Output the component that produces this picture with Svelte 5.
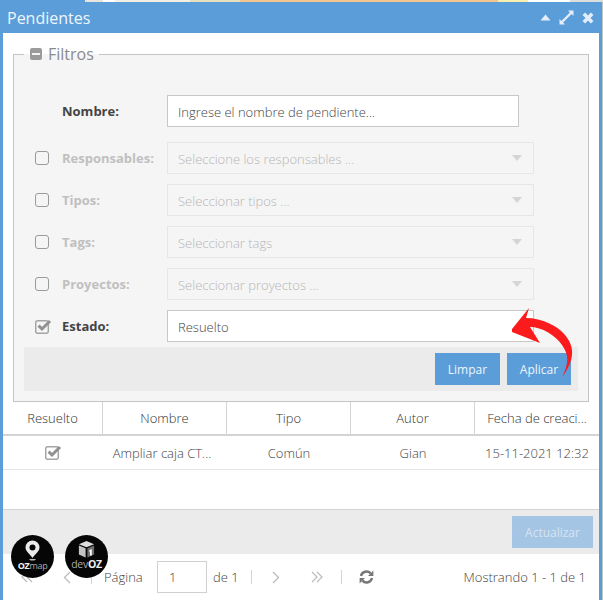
<script>
  const filters = [
    { label: 'Responsables:', hint: 'Seleccione los responsables ...' },
    { label: 'Tipos:', hint: 'Seleccionar tipos ...' },
    { label: 'Tags:', hint: 'Seleccionar tags' },
    { label: 'Proyectos:', hint: 'Seleccionar proyectos ...' }
  ];
  const columns = [
    { name: 'Resuelto', width: 100 },
    { name: 'Nombre', width: 124 },
    { name: 'Tipo', width: 124 },
    { name: 'Autor', width: 124 },
    { name: 'Fecha de creaci...', width: 124 }
  ];
</script>

<div class="page">
  <div class="map-strip"></div>
  <div class="window">
    <header class="titlebar">
      <span class="title">Pendientes</span>
      <div class="tools">
        <svg width="11" height="7" viewBox="0 0 11 7"><path d="M5.5 0.5 L10.5 6.5 H0.5 Z" fill="#e3eefa"/></svg>
        <svg width="15" height="15" viewBox="0 0 15 15" fill="#e3eefa"><path d="M9 0.5h5.5V6L12.6 4.1 4.1 12.6 6 14.5H0.5V9l1.9 1.9 8.5-8.5z"/></svg>
        <svg width="12" height="12" viewBox="0 0 12 12"><path d="M1.8 1.8 L10.2 10.2 M10.2 1.8 L1.8 10.2" stroke="#e3eefa" stroke-width="3.6"/></svg>
      </div>
    </header>

    <div class="content">
      <fieldset class="filters">
        <legend>
          <span class="collapse"><i></i></span>
          <span>Filtros</span>
        </legend>

        <div class="row first">
          <span class="check-slot"></span>
          <span class="label">Nombre:</span>
          <div class="input wide placeholder">Ingrese el nombre de pendiente...</div>
        </div>

        {#each filters as f}
          <div class="row off">
            <span class="check-slot"><span class="box"></span></span>
            <span class="label">{f.label}</span>
            <div class="input combo">
              {f.hint}
              <span class="caret"></span>
            </div>
          </div>
        {/each}

        <div class="row">
          <span class="check-slot">
            <svg class="tick" width="17" height="15" viewBox="0 0 17 15">
              <rect x="0.7" y="1.7" width="12.6" height="12.6" rx="2" fill="none" stroke="#a5a5a5" stroke-width="1.5"/>
              <path d="M3.6 6.6 L7 10 L15 2" fill="none" stroke="#919191" stroke-width="3"/>
            </svg>
          </span>
          <span class="label">Estado:</span>
          <div class="input combo value">Resuelto</div>
        </div>

        <div class="actions">
          <button type="button" class="btn">Limpar</button>
          <button type="button" class="btn narrow">Aplicar</button>
        </div>
      </fieldset>

      <div class="grid-head">
        {#each columns as c}
          <div class="cell" style="width: {c.width}px">{c.name}</div>
        {/each}
      </div>
      <div class="grid-row">
        <div class="cell" style="width: 100px">
          <svg class="tick" width="17" height="15" viewBox="0 0 17 15">
            <rect x="0.7" y="1.7" width="12.6" height="12.6" rx="2" fill="none" stroke="#a5a5a5" stroke-width="1.5"/>
            <path d="M3.6 6.6 L7 10 L15 2" fill="none" stroke="#919191" stroke-width="3"/>
          </svg>
        </div>
        <div class="cell name" style="width: 124px">Ampliar caja CT...</div>
        <div class="cell" style="width: 124px">Común</div>
        <div class="cell" style="width: 124px">Gian</div>
        <div class="cell" style="width: 124px">15-11-2021 12:32</div>
      </div>
      <div class="grid-empty"></div>

      <div class="update-bar">
        <button type="button" class="btn disabled">Actualizar</button>
      </div>

      <footer class="pager">
        <span class="nav first-page">
          <svg width="14" height="12" viewBox="0 0 14 12"><path d="M7 1 L2 6 L7 11 M12 1 L7 6 L12 11" fill="none" stroke="#bbb" stroke-width="1.2"/></svg>
        </span>
        <span class="nav prev">
          <svg width="8" height="13" viewBox="0 0 8 13"><path d="M7 1 L1.5 6.5 L7 12" fill="none" stroke="#bbb" stroke-width="1.3"/></svg>
        </span>
        <span class="sep"></span>
        <span class="txt pagina">Página</span>
        <div class="page-input">1</div>
        <span class="txt total">de 1</span>
        <span class="sep wide"></span>
        <span class="nav next">
          <svg width="8" height="13" viewBox="0 0 8 13"><path d="M1 1 L6.5 6.5 L1 12" fill="none" stroke="#bbb" stroke-width="1.3"/></svg>
        </span>
        <span class="nav last-page">
          <svg width="14" height="12" viewBox="0 0 14 12"><path d="M2 1 L7 6 L2 11 M7 1 L12 6 L7 11" fill="none" stroke="#bbb" stroke-width="1.2"/></svg>
        </span>
        <span class="sep wider"></span>
        <svg class="refresh" width="15" height="14" viewBox="0 0 15 14" fill="none" stroke="#777" stroke-width="2.4">
          <path d="M2 6 A5.6 5.6 0 0 1 11.6 3.4"/>
          <path d="M13 8 A5.6 5.6 0 0 1 3.4 10.6"/>
          <path d="M14.4 0.6 V6 H9 Z" fill="#777" stroke="none"/>
          <path d="M0.6 13.4 V8 H6 Z" fill="#777" stroke="none"/>
        </svg>
        <span class="count">Mostrando 1 - 1 de 1</span>
      </footer>

      <svg class="arrow" width="65" height="72" viewBox="0 0 65 72">
        <path d="M0 21 L17 0 L14 10 C30 10 46 18 53 27 C62 38 64 50 50 69.5 C57 55 57 47 50 37 C43 27 30 19 18 19 L28 35 L0 24 Z" fill="#fb1a1c"/>
      </svg>
    </div>
  </div>

  <div class="badge oz">
    <svg width="15" height="21" viewBox="0 0 15 21">
      <path d="M7.5 0.5 A7 7 0 0 1 14.5 7.5 C14.5 11.5 10 14 7.5 18 C5 14 0.5 11.5 0.5 7.5 A7 7 0 0 1 7.5 0.5 Z M7.5 4.5 A3 3 0 1 0 7.5 10.5 A3 3 0 1 0 7.5 4.5 Z" fill="#eaeaea" fill-rule="evenodd"/>
      <path d="M4 19 H11 L9.5 20.5 H5.5 Z" fill="#bbb"/>
    </svg>
    <span class="badge-name"><b>OZ</b>map</span>
  </div>
  <div class="badge dev">
    <svg width="17" height="19" viewBox="0 0 19 20">
      <path d="M9.5 0.5 L18 4 L9.5 7.5 L1 4 Z" fill="#ddd"/>
      <path d="M1 5.5 L8.5 8.7 V19 L1 15.5 Z" fill="#c4c4c4"/>
      <path d="M10.5 8.7 L18 5.5 V15.5 L10.5 19 Z" fill="#6f6f6f"/>
      <path d="M13 10.5 L15.4 9.4 V16.6 H13.4 V12 L12 12.6 Z" fill="#fff"/>
    </svg>
    <span class="badge-name">dev<b>OZ</b></span>
  </div>
</div>

<style>
  :global(body) {
    margin: 0;
    background: #fff;
  }

  .page {
    position: relative;
    width: 603px;
    height: 600px;
    overflow: hidden;
    font-family: "Open Sans", "Liberation Sans", sans-serif;
    color: #555;
    background: #b9c8c4;
  }

  .map-strip {
    height: 2px;
    background: linear-gradient(90deg, #5b9dd9 0 85px, #e9e5dc 85px 103px, #fff 103px 115px, #f3efe4 115px 190px, #e8dfc0 190px 240px, #f6c58e 240px 498px, #f5efb0 498px 528px, #fff 528px 570px, #ddd 570px);
  }

  .window {
    width: 602px;
    height: 598px;
    display: flex;
    flex-direction: column;
  }

  .titlebar {
    height: 31px;
    flex: none;
    background: #5b9dd9;
    display: flex;
    align-items: center;
    justify-content: space-between;
    padding: 0 8px 0 7px;
  }

  .title {
    font-size: 16px;
    color: #eef5fc;
  }

  .tools {
    display: flex;
    align-items: center;
    gap: 8px;
  }

  .content {
    position: relative;
    flex: 1;
    display: flex;
    flex-direction: column;
    min-height: 0;
    background: #fff;
    border-left: 3px solid #5b9dd9;
    border-right: 3px solid #5b9dd9;
  }

  .filters {
    margin: 10px 10px 0 10px;
    height: 359px;
    padding: 0 10px;
    border: 1px solid #c4c4c4;
    background: #f5f5f5;
    box-sizing: border-box;
    min-width: 0;
  }

  legend {
    padding: 0 5px 0 6px;
    display: flex;
    align-items: center;
    gap: 6px;
    font-size: 16px;
    line-height: 22px;
    color: #8a8a8a;
  }

  .collapse {
    width: 12px;
    height: 12px;
    border-radius: 2px;
    background: #9b9b9b;
    display: flex;
    align-items: center;
    justify-content: center;
  }

  .collapse i {
    width: 8px;
    height: 2px;
    background: #f5f5f5;
  }

  .row {
    display: flex;
    align-items: center;
    height: 32px;
    margin-bottom: 10px;
    padding-left: 11px;
  }

  .row.first {
    margin-top: 30px;
    margin-bottom: 15px;
  }

  .check-slot {
    width: 27px;
    flex: none;
    display: flex;
    align-items: center;
  }

  .box {
    width: 12px;
    height: 12px;
    border: 1px solid #9a9a9a;
    border-radius: 3px;
  }

  .label {
    width: 105px;
    flex: none;
    font-size: 13px;
    font-weight: 700;
    color: #444;
  }

  .input {
    height: 32px;
    box-sizing: border-box;
    width: 352px;
    flex: none;
    border: 1px solid #c8c8c8;
    background: #fff;
    padding: 1px 10px 0;
    font-size: 13px;
    font-weight: 300;
    line-height: 30px;
    color: #444;
    position: relative;
  }

  .input.combo {
    width: 367px;
  }

  .row.off .label {
    color: #c0c0c0;
  }

  .row.off .input {
    background: #f5f5f5;
    border-color: #e6e6e6;
    color: #b5b5b5;
  }

  .caret {
    position: absolute;
    right: 11px;
    top: 12px;
    border-left: 5px solid transparent;
    border-right: 5px solid transparent;
    border-top: 6px solid #d5d5d5;
  }

  .actions {
    margin-top: -5px;
    height: 44px;
    box-sizing: border-box;
    background: #ebebeb;
    display: flex;
    justify-content: flex-end;
    align-items: flex-end;
    gap: 7px;
    padding: 0 7px 6px 0;
  }

  .btn {
    height: 32px;
    width: 65px;
    border: 1px solid #5b9dd9;
    background: #5b9dd9;
    color: #eef5fc;
    font: 12px "Open Sans", sans-serif;
    padding: 0;
  }

  .btn.narrow {
    width: 64px;
  }

  .btn.disabled {
    width: 81px;
    background: #a5c5e4;
    border-color: #a5c5e4;
    color: #d5e4f2;
  }

  .arrow {
    position: absolute;
    left: 509px;
    top: 275px;
  }

  .grid-head {
    display: flex;
    height: 32px;
    flex: none;
    border-bottom: 2px solid #d4d4d4;
  }

  .cell {
    flex: none;
    box-sizing: border-box;
    display: flex;
    align-items: center;
    justify-content: center;
    font-size: 13px;
    font-weight: 300;
    white-space: nowrap;
    color: #333;
    border-right: 1px solid #d4d4d4;
  }

  .cell:last-child {
    border-right: 0;
  }

  .grid-row {
    display: flex;
    height: 33px;
    flex: none;
    border-bottom: 1px solid #e5e5e5;
  }

  .grid-row .cell {
    border-right: 0;
    color: #444;
  }

  .grid-row .cell.name {
    padding-right: 6px;
  }

  .grid-empty {
    height: 39px;
    flex: none;
    border-bottom: 1px solid #d4d4d4;
  }

  .update-bar {
    height: 44px;
    flex: none;
    background: #ebebeb;
    display: flex;
    justify-content: flex-end;
    align-items: center;
    padding-right: 6px;
  }

  .pager {
    flex: 1;
    display: flex;
    align-items: center;
    font-size: 13px;
    font-weight: 300;
    color: #444;
    white-space: nowrap;
    padding: 0 13px 0 17px;
  }

  .nav {
    display: flex;
    align-items: center;
    flex: none;
  }

  .nav.first-page {
    width: 43px;
  }

  .nav.prev {
    width: 28px;
  }

  .nav.next {
    width: 38px;
  }

  .nav.last-page {
    width: 31px;
  }

  .sep {
    width: 1px;
    height: 14px;
    background: #d4d4d4;
    margin-right: 12px;
    flex: none;
  }

  .sep.wide {
    margin-right: 20px;
  }

  .sep.wider {
    margin-right: 17px;
  }

  .txt.pagina {
    width: 39px;
    margin-right: 14px;
  }

  .page-input {
    width: 50px;
    height: 32px;
    box-sizing: border-box;
    border: 1px solid #d0d0d0;
    line-height: 30px;
    padding-left: 11px;
    margin-right: 6px;
    flex: none;
  }

  .txt.total {
    width: 25px;
    margin-right: 13px;
  }

  .count {
    margin-left: auto;
  }

  .badge {
    position: absolute;
    top: 535px;
    width: 43px;
    height: 43px;
    border-radius: 50%;
    background: #060606;
    display: flex;
    flex-direction: column;
    align-items: center;
    padding-top: 5px;
    box-sizing: border-box;
    color: #aaa;
  }

  .badge.oz {
    left: 11px;
  }

  .badge.dev {
    left: 65px;
  }

  .badge-name {
    font: 9px/10px "Open Sans", sans-serif;
    letter-spacing: -0.3px;
    white-space: nowrap;
  }

  .badge-name b {
    color: #f0f0f0;
  }

  .dev .badge-name {
    font-size: 10.5px;
    line-height: 11px;
    margin-top: 0;
  }
</style>
